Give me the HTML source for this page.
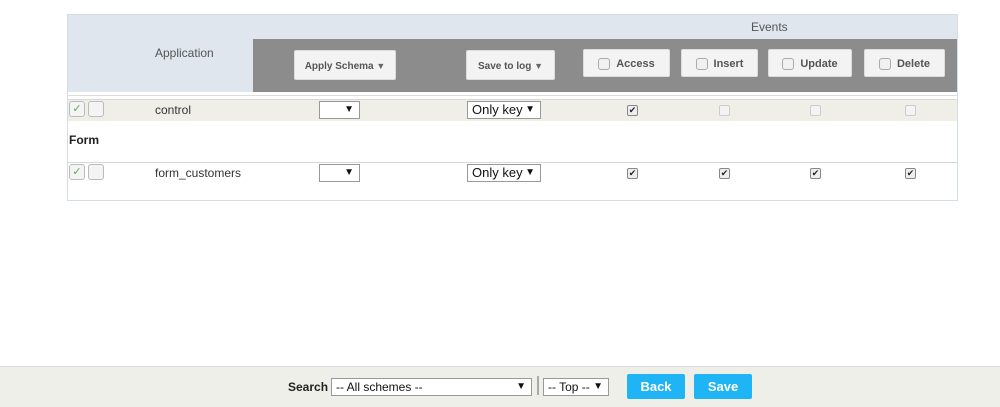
<!DOCTYPE html>
<html><head><style>
*{margin:0;padding:0;box-sizing:border-box}
body{width:1000px;height:407px;background:#fff;font-family:"Liberation Sans",Arial,sans-serif;position:relative;overflow:hidden}
.a{position:absolute}
.btn{position:absolute;background:#f3f3f3;border:1px solid #ddd;border-radius:2px;font-size:11px;color:#555;font-weight:bold;text-align:center}
.cb{display:inline-block;width:12px;height:12px;border:1px solid #aaa;border-radius:3px;background:#f1f1f1;vertical-align:middle;margin-right:6px}
.ck{position:absolute;width:11px;height:11px;border:1px solid #888;border-radius:2px;background:#eee;font-size:9px;line-height:9px;text-align:center;color:#222}
.ck.d{border-color:#ccc;background:#f3f3f3}
.sel{position:absolute;height:18px;border:1px solid #999;background:#fff;font-size:13px;line-height:16px;padding-left:4px;color:#111}
.sel span{position:absolute;right:5px;top:0;font-size:10px}
.gb{position:absolute;width:16px;height:16px;border:1px solid #bbb;border-radius:3px;background:#f4f4f4;font-size:11px;line-height:14px;text-align:center;color:#5a5}
</style></head><body>
<div class="a" style="left:67px;top:14px;width:891px;height:187px;border:1px solid #d4dde6"></div>
<div class="a" style="left:68px;top:15px;width:889px;height:77px;background:#dfe6ee"></div>
<div class="a" style="left:253px;top:39px;width:704px;height:53px;background:#8c8c8c"></div>
<div class="a" style="left:751px;top:20px;font-size:12px;color:#555">Events</div>
<div class="a" style="left:155px;top:46px;font-size:12px;color:#555">Application</div>
<div class="btn" style="left:294px;top:50px;width:102px;height:30px;line-height:30px;font-size:10px">Apply Schema <span style="font-size:9px;color:#666">▼</span></div>
<div class="btn" style="left:466px;top:50px;width:89px;height:30px;line-height:30px;font-size:10px">Save to log <span style="font-size:9px;color:#666">▼</span></div>
<div class="btn" style="left:583px;top:49px;width:87px;height:28px;line-height:28px"><span class="cb"></span>Access</div>
<div class="btn" style="left:681px;top:49px;width:77px;height:28px;line-height:28px"><span class="cb"></span>Insert</div>
<div class="btn" style="left:768px;top:49px;width:84px;height:28px;line-height:28px"><span class="cb"></span>Update</div>
<div class="btn" style="left:864px;top:49px;width:81px;height:28px;line-height:28px"><span class="cb"></span>Delete</div>
<div class="a" style="left:68px;top:95px;width:889px;height:1px;background:#ddd"></div>
<div class="a" style="left:68px;top:99px;width:889px;height:22px;background:#efefe8;border-top:1px solid #d8d8d8"></div>
<div class="gb" style="left:69px;top:101px">✓</div><div class="gb" style="left:88px;top:101px"></div>
<div class="a" style="left:155px;top:103px;font-size:12px;color:#333">control</div>
<div class="sel" style="left:319px;top:101px;width:41px"><span>▼</span></div>
<div class="sel" style="left:467px;top:101px;width:74px">Only key<span>▼</span></div>
<div class="ck" style="left:627px;top:105px">✔</div>
<div class="ck d" style="left:719px;top:105px"></div>
<div class="ck d" style="left:810px;top:105px"></div>
<div class="ck d" style="left:905px;top:105px"></div>
<div class="a" style="left:69px;top:133px;font-size:12px;font-weight:bold;color:#222">Form</div>
<div class="a" style="left:68px;top:162px;width:889px;height:1px;background:#d8d8d8"></div>
<div class="gb" style="left:69px;top:164px">✓</div><div class="gb" style="left:88px;top:164px"></div>
<div class="a" style="left:155px;top:166px;font-size:12px;color:#333">form_customers</div>
<div class="sel" style="left:319px;top:164px;width:41px"><span>▼</span></div>
<div class="sel" style="left:467px;top:164px;width:74px">Only key<span>▼</span></div>
<div class="ck" style="left:627px;top:168px">✔</div>
<div class="ck" style="left:719px;top:168px">✔</div>
<div class="ck" style="left:810px;top:168px">✔</div>
<div class="ck" style="left:905px;top:168px">✔</div>
<div class="a" style="left:0;top:366px;width:1000px;height:41px;background:#efefe9;border-top:1px solid #ddd"></div>
<div class="a" style="left:288px;top:380px;font-size:12px;font-weight:bold;color:#222">Search</div>
<div class="sel" style="left:331px;top:378px;width:201px;font-size:12px">-- All schemes --<span>▼</span></div>
<div class="a" style="left:537px;top:376px;width:2px;height:19px;background:#aaa"></div>
<div class="sel" style="left:543px;top:378px;width:66px;font-size:12px">-- Top --<span>▼</span></div>
<div class="a" style="left:627px;top:374px;width:58px;height:25px;background:#1fb4f4;border-radius:2px;color:#fff;font-size:13px;font-weight:bold;text-align:center;line-height:25px">Back</div>
<div class="a" style="left:694px;top:374px;width:58px;height:25px;background:#1fb4f4;border-radius:2px;color:#fff;font-size:13px;font-weight:bold;text-align:center;line-height:25px">Save</div>
</body></html>
